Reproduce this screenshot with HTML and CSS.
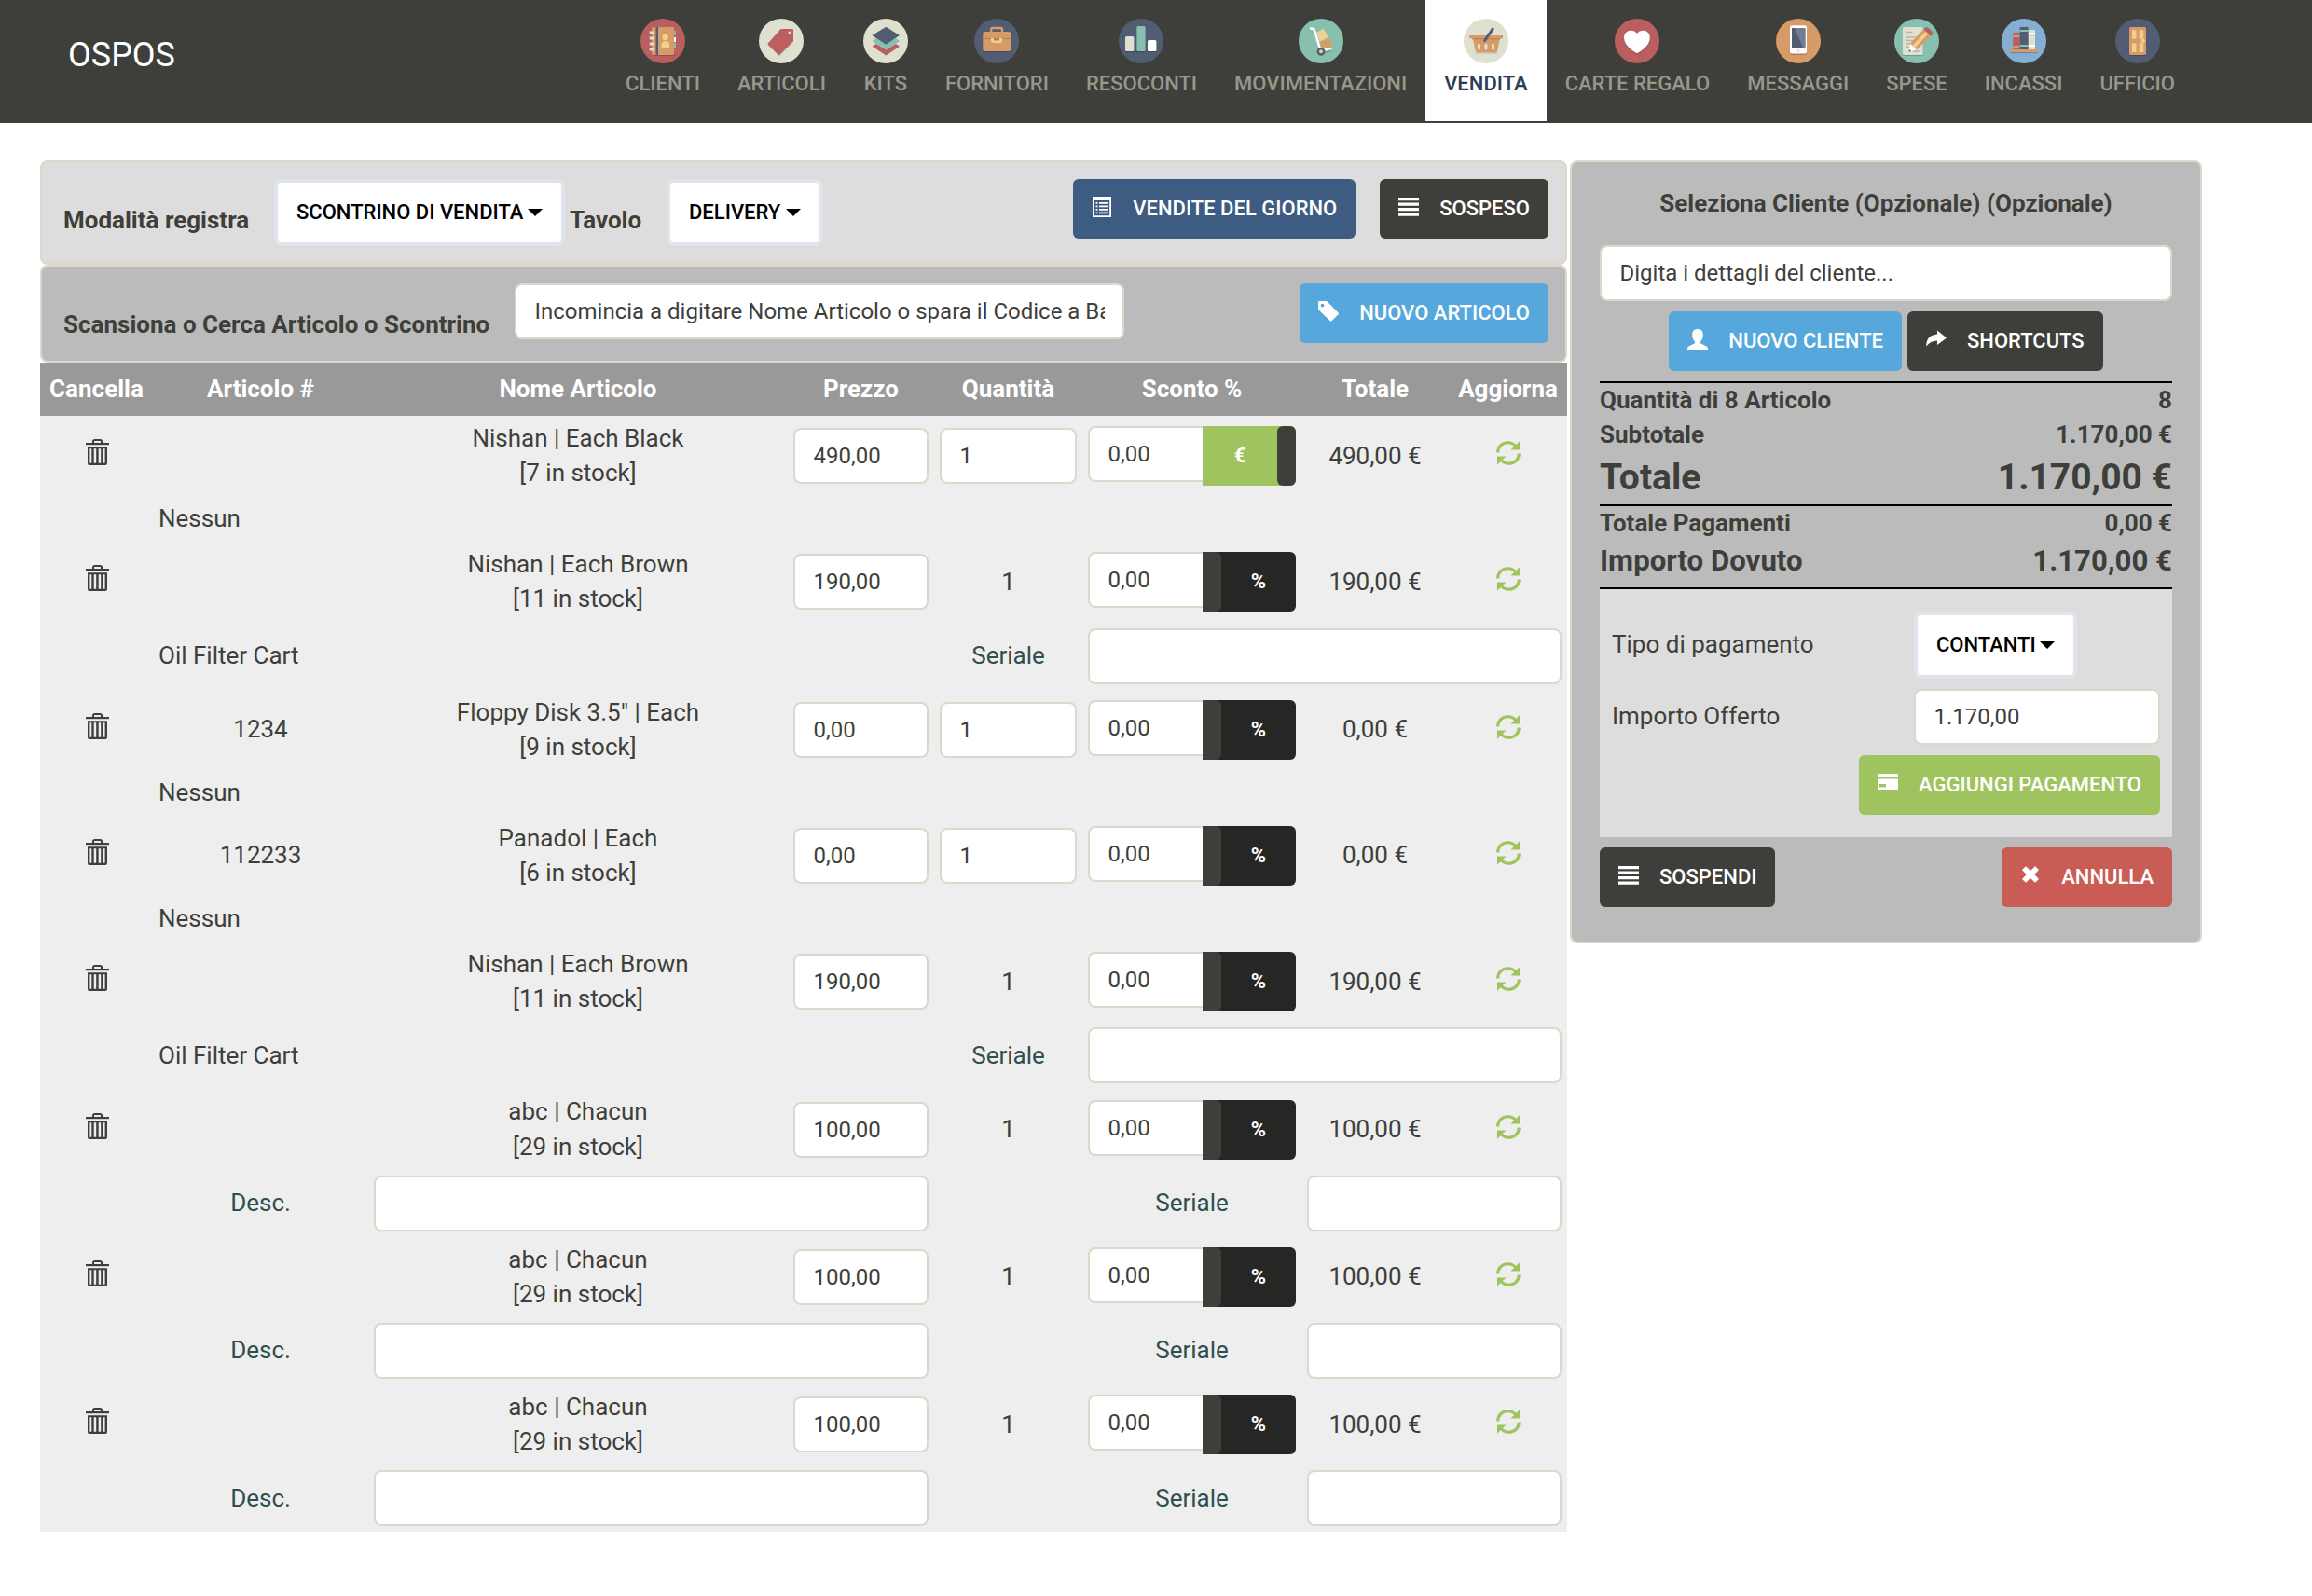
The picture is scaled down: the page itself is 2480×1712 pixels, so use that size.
FILE: index.html
```html
<!DOCTYPE html>
<html lang="it">
<head>
<meta charset="utf-8">
<title>OSPOS</title>
<link rel="stylesheet" href="styles.css">
</head>
<body>
<svg class="sprite" aria-hidden="true">
  <symbol id="trash" viewBox="0 0 25 28"><path d="M8 4.500V2.500Q8 1 9.700 1H15.300Q17 1 17 2.500V4.500" fill="none" stroke="currentColor" stroke-width="2"/><path d="M0 4H25V6.200H0Z" fill="currentColor"/><path fill-rule="evenodd" fill="currentColor" d="M2 8.300H23V26Q23 28 21 28H4Q2 28 2 26ZM4.400 10.300V25.700H6.300V10.300ZM8.700 10.300V25.700H11.200V10.300ZM13.700 10.300V25.700H16.200V10.300ZM18.600 10.300V25.700H20.600V10.300Z"/></symbol>
  <symbol id="refresh" viewBox="0 0 26 26"><path d="M1.700 12.500C1.700 5.500 7 1.800 12.500 1.800C16.500 1.800 19.300 3.500 21.300 6M24.300 13.500C24.300 20.500 19 24.200 13.500 24.200C9.500 24.200 6.700 22.500 4.700 20" fill="none" stroke="currentColor" stroke-width="3.100"/><path d="M25 .3V9.500H15.500ZM1 25.700V16.500H10.500Z" fill="currentColor"/></symbol>
  <symbol id="bars" viewBox="0 0 22 22"><path d="M0 1H22V4.300H0ZM0 6.500H22V9.800H0ZM0 12H22V15.300H0ZM0 17.500H22V20.800H0Z" fill="currentColor"/></symbol>
</svg>

<header class="navbar">
  <a class="brand">OSPOS</a>
  <nav class="nav">
    <a class="nav-item"><svg class="nav-icon" viewBox="0 0 48 48"><circle cx="24" cy="24" r="24" fill="#ba5f5f"/><path d="M12 38h25v2H13z" fill="#944f4c"/><path d="M35 13h3v5h-3z" fill="#84afd2"/><path d="M35 20h3v5h-3z" fill="#fff"/><path d="M35 26h3v5h-3z" fill="#88c0af"/><rect x="12" y="9" width="24" height="30" rx="1.500" fill="#d69b67"/><path d="M16.500 9H19V39H16.500Z" fill="#525d73"/><path d="M9.700 13.500h5v3h-5zM9.700 19.500h5v3h-5zM9.700 25.500h5v3h-5zM9.700 31.500h5v3h-5z" fill="#e0e0d1"/><circle cx="26.700" cy="20" r="3.200" fill="#f0cf8f"/><path d="M22.300 32v-3q0-5 4.500-5t4.500 5v3z" fill="#f0cf8f"/></svg><span>CLIENTI</span></a>
    <a class="nav-item"><svg class="nav-icon" viewBox="0 0 48 48"><circle cx="24" cy="24" r="24" fill="#e0e0d1"/><path d="M22.700 12L37 12V25L22 40.500L9.700 28.500Z" fill="#bdbdb0"/><path d="M23.500 11H36q1 0 1 1V24L22.500 38.500q-1 1-2 0L10 28q-.7-.8 0-1.700Z" fill="#bd5f60"/><circle cx="33" cy="15" r="1.500" fill="#e0e0d1"/></svg><span>ARTICOLI</span></a>
    <a class="nav-item"><svg class="nav-icon" viewBox="0 0 48 48"><circle cx="24" cy="24" r="24" fill="#e0e0d1"/><path d="M9.500 29.700L14 27 24.400 33 35 27 39 29.700 24.400 39.500Z" fill="#ba5f5f"/><path d="M9.500 24L14 21 24.400 27 35 21 39 24 24.400 33.700Z" fill="#88c0af"/><path d="M24.400 8.700L39 18 24.400 27.700 9.300 18Z" fill="#525d73"/></svg><span>KITS</span></a>
    <a class="nav-item"><svg class="nav-icon" viewBox="0 0 48 48"><circle cx="24" cy="24" r="24" fill="#525d73"/><path d="M18.200 15v-3.500q0-1.500 1.500-1.500h8.800q1.500 0 1.500 1.500V15" fill="none" stroke="#d69b67" stroke-width="2.400"/><path d="M9.500 34h29.500v2h-29.500z" fill="#424b5f"/><rect x="9.300" y="14" width="29.800" height="21" rx="1.700" fill="#d69b67"/><path d="M9.300 21h29.800v1h-29.800z" fill="#b37e50"/><path d="M18 21h12v2.500q0 2.500-2.500 2.500h-7q-2.500 0-2.500-2.500z" fill="#f0cf8f"/><path d="M21 21h6v2.500h-6z" fill="#b37e50"/></svg><span>FORNITORI</span></a>
    <a class="nav-item"><svg class="nav-icon" viewBox="0 0 48 48"><circle cx="24" cy="24" r="24" fill="#525d73"/><path d="M7 35h9.400v1.200H7zM19.400 35h9.200v1.200h-9.200zM31 35h9.400v1.200H31z" fill="#424b5f"/><rect x="7" y="19" width="9.400" height="16" rx="1.500" fill="#e0e0d1"/><rect x="19.400" y="8" width="9.200" height="27" rx="1.500" fill="#88c0af"/><rect x="31" y="23" width="9.400" height="12" rx="1.500" fill="#fff"/></svg><span>RESOCONTI</span></a>
    <a class="nav-item"><svg class="nav-icon" viewBox="0 0 48 48"><circle cx="24" cy="24" r="24" fill="#88c0af"/><path d="M24 38l11-4M20 24l3 10" stroke="#72a394" stroke-width="2"/><path d="M19.300 14.700L26.800 10.700 31.800 20 22.500 24.700Z" fill="#f0cf8f"/><path d="M22.500 25L34 21 36 30 25 33.500Z" fill="#d69b67"/><path d="M13 10.500Q16 10 17 12.500L23.500 34.500 34.500 32" fill="none" stroke="#fff" stroke-width="2.500" stroke-linecap="round"/><circle cx="24" cy="35.300" r="3.200" fill="#f0cf8f" stroke="#525d73" stroke-width="2.400"/></svg><span>MOVIMENTAZIONI</span></a>
    <a class="nav-item active"><svg class="nav-icon" viewBox="0 0 48 48"><circle cx="24" cy="24" r="24" fill="#e0e0d1"/><path d="M13 36h23v1.500H13z" fill="#bdbdb0"/><path d="M9.600 21H39L36 35q-.2 1-1.200 1H14q-1 0-1.200-1Z" fill="#d69b67"/><rect x="6" y="18" width="36" height="3.300" rx=".6" fill="#d69b67"/><path d="M9 21.300h30.500v1H9z" fill="#b37e50"/><g fill="#e0e0d1"><rect x="15" y="26.700" width="3" height="6.800" rx="1.500"/><rect x="22.500" y="26.700" width="3" height="6.800" rx="1.500"/><rect x="30" y="26.700" width="3" height="6.800" rx="1.500"/></g><path d="M22.700 23.500L31.200 11.200" stroke="#525d73" stroke-width="3" stroke-linecap="round"/></svg><span>VENDITA</span></a>
    <a class="nav-item"><svg class="nav-icon" viewBox="0 0 48 48"><circle cx="24" cy="24" r="24" fill="#ba5f5f"/><path d="M24 38.500C20 36 10 30 10 21.500C10 13 20 11.500 24 17C28 11.500 37.800 13 37.800 21.500C37.800 30 28 36 24 38.500Z" fill="#974e4d"/><path d="M24 37.300C20 35 10 29 10 20.500C10 12 20 10.500 24 16C28 10.500 37.800 12 37.800 20.500C37.800 29 28 35 24 37.300Z" fill="#fff"/></svg><span>CARTE REGALO</span></a>
    <a class="nav-item"><svg class="nav-icon" viewBox="0 0 48 48"><circle cx="24" cy="24" r="24" fill="#d69b67"/><rect x="15" y="9" width="18" height="30" rx="2" fill="#ae7e53"/><rect x="15" y="7.300" width="18" height="30.200" rx="2" fill="#fff"/><path d="M17 10h14.400v21.300H17z" fill="#525d73"/><path d="M20 10h11.400v21.300H29z" fill="#737c90"/><circle cx="24" cy="34.400" r="1.500" fill="#e0e0d1"/></svg><span>MESSAGGI</span></a>
    <a class="nav-item"><svg class="nav-icon" viewBox="0 0 48 48"><circle cx="24" cy="24" r="24" fill="#88c0af"/><rect x="9" y="10" width="21.600" height="30" rx="1.500" fill="#6d9a8d"/><rect x="9" y="9" width="21.600" height="30" rx="1.500" fill="#e0e0d1"/><path d="M12.500 14.500h7M12.500 20h13M12.500 23.500h10M12.500 27h7M12.500 30.500h5M20 35h7" stroke="#b6b6a8" stroke-width="1.300"/><path d="M15.500 36L17 26.500L24 33Z" fill="#fff"/><path d="M15.500 36l.5-3 2.200 2z" fill="#525d73"/><path d="M17 26.500L31.500 11.500 39 18.500 24 33.500Z" fill="#d69b67"/><path d="M19.300 29L33.800 13.600 36.600 16.200 21.800 31.500Z" fill="#f0cf8f"/><path d="M31.500 11.500l2-2q1.500-1 3 .3l4.500 4.500q1 1.500 0 2.700l-1.800 1.800z" fill="#ba5f5f"/></svg><span>SPESE</span></a>
    <a class="nav-item"><svg class="nav-icon" viewBox="0 0 48 48"><circle cx="24" cy="24" r="24" fill="#84afd2"/><path d="M9.500 36h29v1.200h-29z" fill="#688bab"/><path d="M12.200 16q0-1 1-1h6.400v18h-7.400z" fill="#ba5f5f"/><path d="M12.200 18h7.400v2h-7.400zM12.200 29h7.400v2h-7.400z" fill="#d69b67"/><path d="M28.600 12H35q1 0 1 1v20h-7.400z" fill="#e0e0d1"/><path d="M28.600 15H36v2h-7.400zM28.600 28H36v2h-7.400z" fill="#fff"/><path d="M19.600 10q0-1 1-1h7q1 0 1 1v23h-9z" fill="#525d73"/><path d="M19.600 12h9v2h-9zM19.600 28h9v2h-9z" fill="#88c0af"/><rect x="8.600" y="33" width="30.400" height="3" rx="1" fill="#d69b67"/></svg><span>INCASSI</span></a>
    <a class="nav-item"><svg class="nav-icon" viewBox="0 0 48 48"><circle cx="24" cy="24" r="24" fill="#525d73"/><rect x="15" y="10" width="18" height="30" rx="1.500" fill="#424b5f"/><rect x="15" y="9" width="18" height="30" rx="1.500" fill="#d69b67"/><path d="M18 12.300h4.500v9.500H18zM25.700 12.300h4.500v9.500h-4.500zM18 26.300h4.500V36H18zM25.700 26.300h4.500V36h-4.500z" fill="#f0cf8f"/><circle cx="29.800" cy="23.700" r="2.200" fill="#f0cf8f"/></svg><span>UFFICIO</span></a>
  </nav>
</header>

<main class="page">
  <section class="register">
    <div class="bar mode-bar">
      <label class="bar-label mode-label">Modalità registra</label>
      <button class="select mode-select">SCONTRINO DI VENDITA<i class="caret"></i></button>
      <label class="bar-label table-label">Tavolo</label>
      <button class="select table-select">DELIVERY<i class="caret"></i></button>
      <button class="btn primary push"><svg class="ico" viewBox="0 0 22 22"><path fill-rule="evenodd" fill="currentColor" d="M1 0H21V22H1ZM2.800 3.500V20.200H19.200V3.500Z"/><path d="M4.500 6h2v1.800h-2zM8 6h9.500v1.800H8zM4.500 9.500h2v1.800h-2zM8 9.500h9.500v1.800H8zM4.500 13h2v1.800h-2zM8 13h9.500v1.800H8zM4.500 16.500h2v1.800h-2zM8 16.500h9.500v1.800H8z" fill="currentColor"/></svg>VENDITE DEL GIORNO</button>
      <button class="btn dark held"><svg class="ico"><use href="#bars"/></svg>SOSPESO</button>
    </div>
    <div class="bar search-bar">
      <label class="bar-label search-label">Scansiona o Cerca Articolo o Scontrino</label>
      <input class="field search-field" value="Incomincia a digitare Nome Articolo o spara il Codice a Barre...">
      <button class="btn info push"><svg class="ico" viewBox="0 0 22 22"><path fill-rule="evenodd" fill="currentColor" d="M0 1.200Q0 0 1.200 0H8.500Q9.300 0 10 .7L21.500 12.500Q22.300 13.400 21.500 14.300L14.500 21.300Q13.600 22 12.800 21.300L.6 9.500Q0 8.800 0 8ZM4.500 2.700A1.900 1.900 0 1 0 4.500 6.500A1.900 1.900 0 1 0 4.500 2.700Z"/></svg>NUOVO ARTICOLO</button>
    </div>

    <div class="cart">
      <div class="row head"><b>Cancella</b><b>Articolo #</b><b>Nome Articolo</b><b>Prezzo</b><b>Quantità</b><b>Sconto %</b><b>Totale</b><b>Aggiorna</b></div>

      <div class="row line"><svg class="trash"><use href="#trash"/></svg><span></span><span>Nishan | Each Black<br>[7 in stock]</span><input class="field" value="490,00"><input class="field" value="1"><div class="discount"><input class="field" value="0,00"><span class="toggle on"><b>€</b></span></div><span>490,00 €</span><svg class="refresh"><use href="#refresh"/></svg></div>
      <div class="row note"><span class="attr">Nessun</span></div>

      <div class="row line"><svg class="trash"><use href="#trash"/></svg><span></span><span>Nishan | Each Brown<br>[11 in stock]</span><input class="field" value="190,00"><span>1</span><div class="discount"><input class="field" value="0,00"><span class="toggle"><b>%</b></span></div><span>190,00 €</span><svg class="refresh"><use href="#refresh"/></svg></div>
      <div class="row extra"><span class="attr">Oil Filter Cart</span><span class="hint qty-col">Seriale</span><input class="field wide-serial"></div>

      <div class="row line"><svg class="trash"><use href="#trash"/></svg><span>1234</span><span>Floppy Disk 3.5" | Each<br>[9 in stock]</span><input class="field" value="0,00"><input class="field" value="1"><div class="discount"><input class="field" value="0,00"><span class="toggle"><b>%</b></span></div><span>0,00 €</span><svg class="refresh"><use href="#refresh"/></svg></div>
      <div class="row note"><span class="attr">Nessun</span></div>

      <div class="row line"><svg class="trash"><use href="#trash"/></svg><span>112233</span><span>Panadol | Each<br>[6 in stock]</span><input class="field" value="0,00"><input class="field" value="1"><div class="discount"><input class="field" value="0,00"><span class="toggle"><b>%</b></span></div><span>0,00 €</span><svg class="refresh"><use href="#refresh"/></svg></div>
      <div class="row note"><span class="attr">Nessun</span></div>

      <div class="row line"><svg class="trash"><use href="#trash"/></svg><span></span><span>Nishan | Each Brown<br>[11 in stock]</span><input class="field" value="190,00"><span>1</span><div class="discount"><input class="field" value="0,00"><span class="toggle"><b>%</b></span></div><span>190,00 €</span><svg class="refresh"><use href="#refresh"/></svg></div>
      <div class="row extra"><span class="attr">Oil Filter Cart</span><span class="hint qty-col">Seriale</span><input class="field wide-serial"></div>

      <div class="row line"><svg class="trash"><use href="#trash"/></svg><span></span><span>abc | Chacun<br>[29 in stock]</span><input class="field" value="100,00"><span>1</span><div class="discount"><input class="field" value="0,00"><span class="toggle"><b>%</b></span></div><span>100,00 €</span><svg class="refresh"><use href="#refresh"/></svg></div>
      <div class="row extra"><span class="hint desc-col">Desc.</span><input class="field desc-field"><span class="hint disc-col">Seriale</span><input class="field serial"></div>

      <div class="row line"><svg class="trash"><use href="#trash"/></svg><span></span><span>abc | Chacun<br>[29 in stock]</span><input class="field" value="100,00"><span>1</span><div class="discount"><input class="field" value="0,00"><span class="toggle"><b>%</b></span></div><span>100,00 €</span><svg class="refresh"><use href="#refresh"/></svg></div>
      <div class="row extra"><span class="hint desc-col">Desc.</span><input class="field desc-field"><span class="hint disc-col">Seriale</span><input class="field serial"></div>

      <div class="row line"><svg class="trash"><use href="#trash"/></svg><span></span><span>abc | Chacun<br>[29 in stock]</span><input class="field" value="100,00"><span>1</span><div class="discount"><input class="field" value="0,00"><span class="toggle"><b>%</b></span></div><span>100,00 €</span><svg class="refresh"><use href="#refresh"/></svg></div>
      <div class="row extra"><span class="hint desc-col">Desc.</span><input class="field desc-field"><span class="hint disc-col">Seriale</span><input class="field serial"></div>
    </div>
  </section>

  <aside class="sale">
    <label class="sale-title">Seleziona Cliente (Opzionale) (Opzionale)</label>
    <input class="field customer" value="Digita i dettagli del cliente...">
    <div class="sale-buttons">
      <button class="btn info"><svg class="ico" viewBox="0 0 22 22"><path d="M11 0C14.500 0 16.800 2 16.800 6C16.800 10 15.500 12 14 13.500V15.200L20.500 18.500Q22 19.300 22 21V22H0V21Q0 19.300 1.500 18.500L8 15.200V13.500C6.500 12 5.200 10 5.200 6C5.200 2 7.500 0 11 0Z" fill="currentColor"/></svg>NUOVO CLIENTE</button>
      <button class="btn dark"><svg class="ico" viewBox="0 0 22 22"><path d="M12 1.500L22 9.500L12 17V12.500Q4.500 12.500 .3 18.500Q0 6.500 12 5.500Z" fill="currentColor"/></svg>SHORTCUTS</button>
    </div>
    <div class="totals">
      <div class="total"><span>Quantità di 8 Articolo</span><span>8</span></div>
      <div class="total"><span>Subtotale</span><span>1.170,00 €</span></div>
      <div class="total grand"><span>Totale</span><span>1.170,00 €</span></div>
    </div>
    <div class="totals">
      <div class="total"><span>Totale Pagamenti</span><span>0,00 €</span></div>
      <div class="total due"><span>Importo Dovuto</span><span>1.170,00 €</span></div>
    </div>
    <div class="payment">
      <div class="pay-row type-row"><label>Tipo di pagamento</label><button class="select pay-select">CONTANTI<i class="caret"></i></button></div>
      <div class="pay-row"><label>Importo Offerto</label><input class="field amount" value="1.170,00"></div>
      <button class="btn success"><svg class="ico" viewBox="0 0 22 22"><path fill-rule="evenodd" fill="currentColor" d="M1 1H21Q22 1 22 2V4.500H0V2Q0 1 1 1ZM0 6.500H22V17Q22 18 21 18H1Q0 18 0 17ZM2 12V15.500H9V12Z"/></svg>AGGIUNGI PAGAMENTO</button>
    </div>
    <div class="finish">
      <button class="btn dark"><svg class="ico"><use href="#bars"/></svg>SOSPENDI</button>
      <button class="btn danger"><svg class="ico" viewBox="0 0 22 22"><path d="M2 5L6 1.200 11 6 16 1.200 20 5 15.300 10 20 15 16 18.800 11 14 6 18.800 2 15 6.700 10Z" fill="currentColor"/></svg>ANNULLA</button>
    </div>
  </aside>
</main>
</body>
</html>
```
FILE: styles.css
```css
* { box-sizing: border-box; }

body {
  margin: 0;
  background: #fff;
  color: #3e3f3a;
  font: 26px/37.14px Roboto, "Liberation Sans", sans-serif;
}

.sprite { display: none; }

/* Navigation */
.navbar {
  display: flex;
  justify-content: space-between;
  height: 132px;
  padding: 0 127px 0 73px;
  background: #3e3f3a;
  border-bottom: 1px solid #433e44;
}

.brand {
  color: #fff;
  font-size: 36px;
  line-height: 118px;
}

.nav { display: flex; height: 130px; }

.nav-item {
  display: flex;
  flex-direction: column;
  align-items: center;
  gap: 6px;
  padding: 20px 20px 0;
  color: #98978b;
  font-size: 22px;
  font-weight: 500;
  line-height: 32px;
  white-space: nowrap;
}

.nav-item.active { background: #fff; color: #2f3c50; }
.nav-icon { width: 48px; height: 48px; }

/* Page */
.page {
  display: flex;
  align-items: flex-start;
  gap: 3px;
  padding: 40px 0 0 43px;
}

.register { width: 1638px; }

.bar {
  display: flex;
  align-items: flex-start;
  padding: 18px 18px 0 23px;
  border: 2px solid #dfd7ca;
  border-radius: 8px;
}

.mode-bar { height: 112px; background: #ddd; }
.search-bar { height: 105px; background: #bbb; }

.bar-label { margin-top: 26px; font-weight: 700; white-space: nowrap; }
.search-label { width: 484px; }
.mode-label { width: 226px; }
.table-label { width: 104px; margin-left: 5px; }
.push { margin-left: auto; }
.held { margin-left: 26px; }

button { font-family: inherit; border: 0; margin: 0; }

.select {
  display: flex;
  align-items: center;
  justify-content: space-between;
  height: 72px;
  padding: 0 20px;
  border: 4px solid #dfe5ed;
  border-radius: 8px;
  background: #fff;
  color: #000;
  font-size: 22px;
  font-weight: 500;
  line-height: 64px;
  white-space: nowrap;
}

.mode-select { width: 312px; }
.table-select { width: 168px; }
.pay-select { width: 175px; }

.caret {
  border: 8px solid transparent;
  border-top-color: #000;
  border-bottom: 0;
}

.btn {
  display: flex;
  align-items: center;
  gap: 22px;
  height: 64px;
  padding: 0 20px;
  border-radius: 6px;
  color: #fff;
  font-size: 22px;
  font-weight: 500;
  line-height: 62px;
  white-space: nowrap;
}

.ico { flex: none; width: 22px; height: 22px; margin-bottom: 4px; }

.primary { background: #3e5b82; }
.dark { background: #3e3f3a; }
.info { background: #56a8dc; }
.success { background: #9fc45f; }
.danger { background: #c95c54; }

.field {
  width: 100%;
  min-width: 0;
  height: 60px;
  margin: 0;
  padding: 0 19.5px;
  border: 2px solid #dfd7ca;
  border-radius: 8px;
  background: #fff;
  color: #3e3f3a;
  font: 24px Roboto, "Liberation Sans", sans-serif;
}

.search-field { width: 654px; }

/* Cart */
.cart { background: #eee; }

.row {
  display: grid;
  grid-template-columns: 121px 231px 450px 157px 159px 235px 158px 127px;
  align-items: center;
  justify-items: center;
  text-align: center;
}

.row > .field, .discount { width: calc(100% - 12px); }

.head { height: 57px; background: #999; color: #fff; }
.line { height: 86.2px; }
.note { height: 49.14px; }
.extra { height: 72.1px; }

.discount { display: flex; align-items: flex-start; }
.discount .field { flex: 1; border-right: 0; border-radius: 8px 0 0 8px; }

.toggle {
  display: flex;
  flex: none;
  width: 100px;
  height: 64px;
  border-radius: 0 6px 6px 0;
  background: #262624;
  color: #fff;
  font-size: 22px;
  line-height: 63px;
}

/* Sliding handle between the percent and currency halves */
.toggle::before {
  content: "";
  width: 20px;
  border-radius: 0 6px 6px 0;
  background: #3e3f3a;
}

.toggle b { flex: 1; }
.toggle.on { flex-direction: row-reverse; background: #9fc45f; }
.toggle.on::before { border-radius: 6px; }

.trash { width: 25px; height: 28px; margin: 0 0 8px 2px; }
.refresh { width: 26px; height: 26px; margin-bottom: 6px; color: #9fc45f; }

.attr { grid-column: 2 / 4; justify-self: start; padding-left: 6px; }
.hint { color: #2f4f4f; }
.desc-col { grid-column: 2; }
.desc-field { grid-column: 3 / 5; }
.qty-col { grid-column: 5; }
.disc-col { grid-column: 6; }
.wide-serial { grid-column: 6 / 9; }
.serial { grid-column: 7 / 9; }

/* Sale summary */
.sale {
  width: 678px;
  height: 840px;
  padding: 26px 30px 0;
  border: 2px solid #dfd7ca;
  border-radius: 8px;
  background: #bbb;
}

.sale-title { display: block; height: 63px; font-weight: 700; text-align: center; }
.customer { display: block; }
.sale-buttons { display: flex; justify-content: center; gap: 6px; margin: 11px 0; }

.totals { border-top: 2px solid #000; font-weight: 700; }
.total { display: flex; justify-content: space-between; }
.grand { height: 55.7px; font-size: 39px; line-height: 55.7px; }
.due { height: 49.5px; font-size: 31.2px; line-height: 44.6px; }

.payment {
  display: flex;
  flex-direction: column;
  height: 268px;
  padding: 24px 13px 0;
  border-top: 2px solid #000;
  background: #ddd;
}

.pay-row { display: grid; grid-template-columns: 324px 1fr; align-items: center; margin-bottom: 11px; }
.payment .btn { align-self: flex-end; }
.finish { display: flex; justify-content: space-between; margin-top: 11px; }
```
